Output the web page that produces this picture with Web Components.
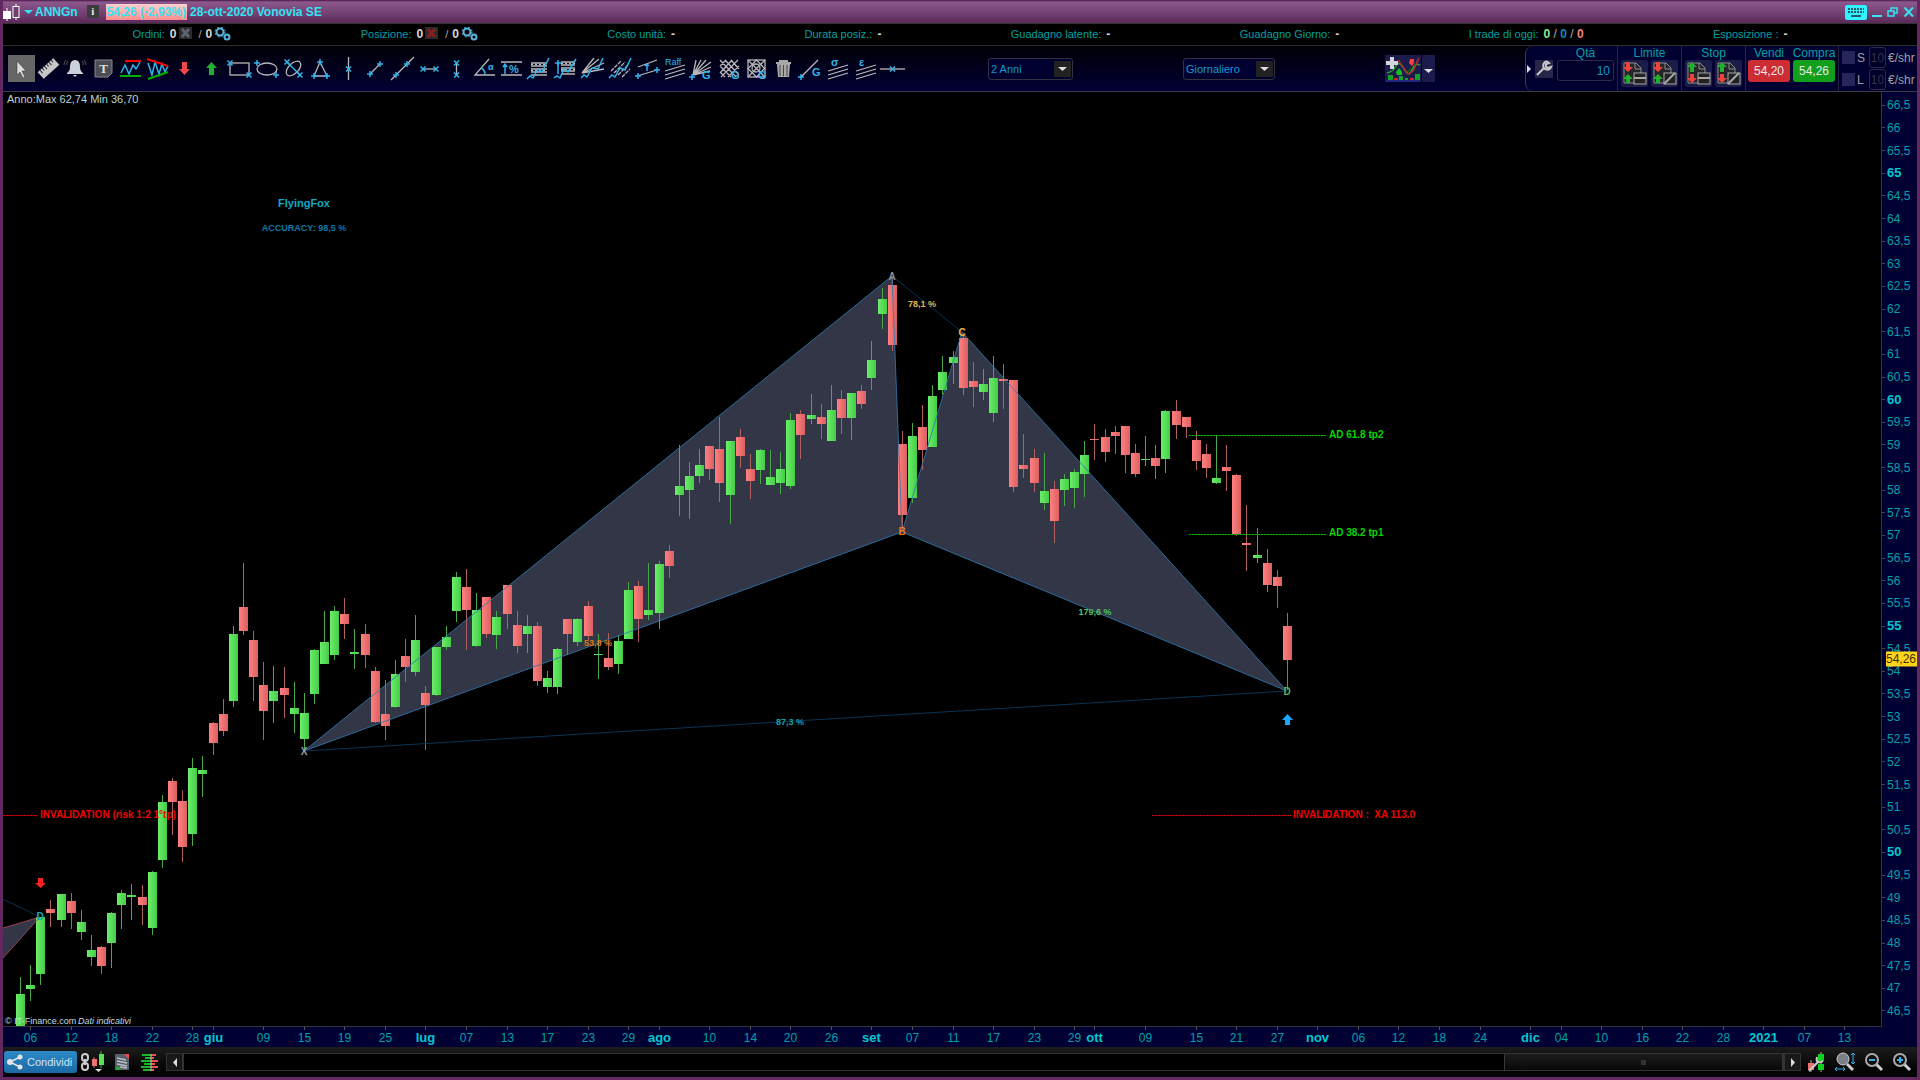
<!DOCTYPE html>
<html lang="it">
<head>
<meta charset="utf-8">
<title>ANNGn - Vonovia SE</title>
<style>
  html, body {
    height: 100%;
    margin: 0;
    background: #000;
  }
  body {
    font-family: "Liberation Sans", Arial, sans-serif;
    font-size: 11px;
    color: #00a0a0;
  }
</style>
</head>
<body>

<trading-window></trading-window>

<template id="windowTemplate">
  <style>
    :host {
      display: flex;
      flex-direction: column;
      box-sizing: border-box;
      min-height: 100vh;
      border: solid #61295f;
      border-width: 0 3px 3px;
    }
    price-chart { flex: 1; }
  </style>
  <title-bar></title-bar>
  <status-row>
    <status-item label="Ordini:" close="#5c636c">0</status-item>
    <status-item label="Posizione:" close="#8c1d1d">0</status-item>
    <status-item label="Costo unità:">-</status-item>
    <status-item label="Durata posiz.:">-</status-item>
    <status-item label="Guadagno latente:">-</status-item>
    <status-item label="Guadagno Giorno:">-</status-item>
    <status-item label="I trade di oggi:"><span style="color:#8fe88f">0</span> <i>/</i> <span style="color:#1287c4">0</span> <i>/</i> <span style="color:#f28080">0</span></status-item>
    <status-item label="Esposizione :">-</status-item>
  </status-row>
  <tool-bar></tool-bar>
  <price-chart></price-chart>
  <bottom-bar></bottom-bar>
</template>

<template id="titleTemplate">
  <style>
    :host {
      display: flex;
      align-items: center;
      height: 23px;
      border-bottom: 1px solid #333;
      background: linear-gradient(#4a1748 0, #8d588c 2px, #6f3d6e 15px, #5c285a);
      font-size: 12px;
      font-weight: bold;
      color: #35e3f2;
    }
    button {
      display: flex;
      padding: 0;
      border: 0;
      background: none;
    }
    .name { margin: 0 9px 0 1px; }
    .info {
      justify-content: center;
      width: 12px;
      background: #3c3c3c;
      font: bold 11px/13px "Liberation Serif", serif;
      color: #e8e8e8;
    }
    .price {
      margin: 0 3px 0 7px;
      padding: 0 1px;
      line-height: 16px;
      background: linear-gradient(#ffd0d0, #ff8c8c);
    }
    .buttons {
      display: flex;
      align-items: center;
      gap: 5px;
      margin: 0 2px 0 auto;
    }
  </style>
  <svg width="17" height="20" viewBox="0 0 17 20">
    <path d="M4 6v13M13 2v16" stroke="#fff"/>
    <rect y="9" width="8" height="8" fill="#fff"/>
    <rect x="10" y="4.500" width="6" height="11" fill="#6f3d6e" stroke="#fff"/>
  </svg>
  <button aria-label="Scegli strumento"><svg width="14" height="10"><path d="M4 3h9l-4.500 4z" fill="#35e3f2"/></svg></button>
  <span class="name">ANNGn</span>
  <button class="info" aria-label="Informazioni">i</button>
  <span class="price">54,26 (-2,93%)</span>
  <span>28-ott-2020 Vonovia SE</span>
  <div class="buttons">
    <button aria-label="Tastiera"><svg width="22" height="16" viewBox="0 0 22 16"><rect y="1" width="22" height="15" rx="2" fill="#2ff3ff"/><path d="M3 5h16M3 8h16" stroke="#245a66" stroke-width="2" stroke-dasharray="2 1"/><path d="M6 12h10" stroke="#245a66" stroke-width="2"/></svg></button>
    <button aria-label="Riduci"><svg width="10" height="12"><path d="M0 10h10" stroke="#35e3f2" stroke-width="2"/></svg></button>
    <button aria-label="Ripristina"><svg width="11" height="12"><path d="M4 5V2h6v5H7" fill="none" stroke="#35e3f2" stroke-width="1.500"/><rect x="1" y="5" width="6" height="5" fill="none" stroke="#35e3f2" stroke-width="1.500"/></svg></button>
    <button aria-label="Chiudi"><svg width="12" height="12"><path d="M1.500 1.500l8.500 9M10 1.500l-8.500 9" stroke="#35e3f2" stroke-width="2"/></svg></button>
  </div>
</template>

<template id="toolbarTemplate">
  <style>
    :host {
      display: flex;
      align-items: center;
      height: 45px;
      border-bottom: 1px solid #3a3a44;
      background: linear-gradient(#000006, #000033);
    }
    .tools {
      display: grid;
      grid-template-columns: repeat(33, 1fr);
      width: 898px;
      margin: 0 82px 0 5px;
    }
    tool-button[name=pointer] { background: #666; }
    .indicators {
      display: flex;
      gap: 1px;
    }
    .indicators button {
      padding: 0;
      border: 0;
      height: 27px;
      background: #1b1b4c;
    }
    drop-down { margin-right: 110px; }
    order-panel {
      align-self: stretch;
      margin-left: auto;
    }
  </style>
  <div class="tools"></div>
  <drop-down label="Periodo" value="2 Anni" style="width:85px"></drop-down>
  <drop-down label="Intervallo" value="Giornaliero" style="width:92px"></drop-down>
  <div class="indicators">
    <button aria-label="Aggiungi indicatore"><svg width="36" height="27" viewBox="0 0 36 27" style="display:block">
      <path d="M14 8l8 8 8-6-8 9z" fill="#0b5c14"/>
      <path d="M2 18q6-1 9-7t8 3 8 1 8-5" fill="none" stroke="#1fa52c" stroke-width="1.500"/>
      <path d="M13 5l10 14q5-1 7-7t4-9" fill="none" stroke="#b02a2a" stroke-width="1.500"/>
      <path d="M3 20h5v5h-5zM14 21h4v4h-4zM30 19h5v6h-5zM20 23h3v2h-3z" fill="#18a025"/>
      <path d="M9 23h4v2h-4zM25 23h4v2h-4z" fill="#c32a2a"/>
      <path d="M11 17l3-4 3 4v3h-5z" fill="#12c020"/>
      <path d="M25 4h4v4l-2 3-3-3z" fill="#ff4040"/>
      <path d="M5 2h4v4h4v4h-4v4h-4v-4h-4v-4h4z" fill="#d4d4e0"/>
      <path d="M1 26h34" stroke="#2a36b0"/>
    </svg></button>
    <button aria-label="Altri indicatori"><svg width="13" height="27" style="display:block"><path d="M2 14h9l-4.500 4z" fill="#ddd"/></svg></button>
  </div>
  <order-panel></order-panel>
</template>

<template id="orderTemplate">
  <style>
    :host {
      display: flex;
      width: 391px;
      border-left: 1px solid #3a3a44;
      border-radius: 8px 0 0 8px;
      background: #000030;
      font-size: 12px;
      color: #00a0a8;
    }
    section {
      box-sizing: border-box;
      display: grid;
      grid-template-rows: 13px 27px;
      justify-items: center;
      row-gap: 1px;
      padding: 0 3px;
      border-right: 1px solid #24243a;
    }
    section > label, section > span { line-height: 14px; }
    section > div {
      display: flex;
      gap: 3px;
    }
    button {
      box-sizing: border-box;
      padding: 0;
      border: 0;
      font: inherit;
    }
    .wrench {
      display: flex;
      align-items: center;
      width: 28px;
    }
    .wrench button {
      display: flex;
      width: 18px;
      height: 18px;
      background: #26264a;
    }
    input[type=text] {
      box-sizing: border-box;
      height: 21px;
      border: 1px solid #2c2c46;
      border-radius: 3px;
      background: #00002a;
      font: inherit;
      color: #0f9bd0;
      text-align: right;
    }
    #qty {
      width: 57px;
      padding: 0 3px;
    }
    .quote {
      width: 42px;
      height: 22px;
      margin: 0;
      border-radius: 3px;
      color: #e8e8e8;
    }
    .sell { background: #cc2c32; }
    .buy { background: #12a01c; }
    .prices {
      display: grid;
      grid-template-columns: 42px 42px;
      grid-template-rows: 13px 27px;
      gap: 1px 3px;
      padding: 0 3px 0 2px;
      justify-items: center;
      border-right: 1px solid #24243a;
    }
    .prices span { line-height: 14px; }
    .stops {
      display: grid;
      grid-template-columns: 13px 10px 17px 28px;
      align-content: space-evenly;
      align-items: center;
      column-gap: 2px;
      padding-left: 3px;
      color: #a0a0a0;
    }
    .stops input[type=text] {
      width: 17px;
      padding: 0;
      color: #333344;
      text-align: center;
    }
    input[type=checkbox] {
      appearance: none;
      width: 13px;
      height: 13px;
      margin: 0;
      background: #26265a;
    }
  </style>
  <div class="wrench">
    <svg width="9" height="14"><path d="M1 3l4 4-4 4z" fill="#ddd"/></svg>
    <button aria-label="Impostazioni ordini"><svg width="18" height="18"><path d="M2 15l7-7M9 3q-2 4 1 6 4 2 6-2l-3 1-2-1 0-3 3-1q-3-3-5 0z" stroke="#c8c8c8" stroke-width="2" fill="none"/></svg></button>
  </div>
  <section>
    <label for="qty">Qtà</label>
    <input id="qty" type="text" value="10">
  </section>
  <section>
    <span>Limite</span>
    <div>
      <order-button label="Limite" up="#f04040" down="#20b030"></order-button>
      <order-button label="Limite personalizzato" up="#f04040" down="#20b030" custom></order-button>
    </div>
  </section>
  <section>
    <span>Stop</span>
    <div>
      <order-button label="Stop" up="#20b030" down="#f04040" flip></order-button>
      <order-button label="Stop personalizzato" up="#20b030" down="#f04040" flip custom></order-button>
    </div>
  </section>
  <div class="prices">
    <span>Vendi</span><span>Compra</span>
    <button class="quote sell">54,20</button>
    <button class="quote buy">54,26</button>
  </div>
  <div class="stops">
    <input type="checkbox" id="s"><label for="s">S</label><input type="text" value="10" aria-label="Stop per azione" disabled><span>€/shr</span>
    <input type="checkbox" id="l"><label for="l">L</label><input type="text" value="10" aria-label="Limite per azione" disabled><span>€/shr</span>
  </div>
</template>

<template id="chartTemplate">
  <style>
    :host {
      display: grid;
      grid-template-columns: 1fr 35px;
      grid-template-rows: 1fr 20px;
      min-height: 0;
      background: #000033;
      color: #00a0a8;
      font-size: 12px;
    }
    svg {
      display: block;
      width: 100%;
      height: 100%;
      min-height: 0;
    }
    .plot {
      min-height: 0;
      border-right: 1px solid #33333c;
      border-bottom: 1px solid #33333c;
      background: #000;
    }
    .prices {
      position: relative;
      display: flex;
      flex-direction: column;
      padding: 2px 0 5px;
    }
    .prices div {
      display: flex;
      flex: 1;
      align-items: center;
      gap: 2px;
      min-height: 0;
      line-height: 14px;
    }
    .prices div::before {
      content: "";
      width: 3px;
      height: 1px;
      background: #444450;
    }
    .prices .major, .major {
      font-size: 13px;
      font-weight: bold;
      color: #00c8d0;
    }
    .last {
      position: absolute;
      top: 60.6%;
      left: 4px;
      right: 0;
      transform: translateY(-50%);
      line-height: 15px;
      background: #ffd21c;
      color: #3c3200;
    }
    text {
      font-weight: bold;
      white-space: pre;
    }
    .times text {
      font-weight: normal;
      text-anchor: middle;
      fill: #00a0a8;
    }
    .times text.major {
      font-weight: bold;
      fill: #00c8d0;
    }
  </style>
  <div class="plot">
    <svg viewBox="3 92 1878 934" preserveAspectRatio="xMinYMin meet">
      <defs>
        <linearGradient id="up"><stop stop-color="#6bee6b"/><stop offset="1" stop-color="#45cc45"/></linearGradient>
        <linearGradient id="down"><stop stop-color="#ff8080"/><stop offset="1" stop-color="#dc6060"/></linearGradient>
      </defs>
      <g fill="#323646">
        <path d="M304 751L892 276 902 532zM902 532L962 332 1287 691z"/>
        <path d="M3 928L40 917 3 958"/>
      </g>
      <g class="candles"></g>
      <g fill="none" stroke="#2e79b0" stroke-opacity=".85">
        <path d="M304 751L892 276 902 532 304 751M902 532L962 332 1287 691 902 532"/>
        <path d="M304 751L1287 691M892 276L962 332M3 899L40 917" stroke="#0a3c62"/>
        <path d="M3 928L40 917 3 958" stroke="#b04858"/>
      </g>
      <g fill="none">
        <path d="M3 815.500H37M1152 815.500H1291" stroke="#700000"/>
        <path d="M3 815.500H37M1152 815.500H1291" stroke="#d80000" stroke-dasharray="2 1"/>
        <path d="M1189 435.500H1326M1189 534.500H1326" stroke="#006800"/>
        <path d="M1189 435.500H1326M1189 534.500H1326" stroke="#00b400" stroke-dasharray="2 1"/>
      </g>
      <path d="M38 878h5v5h3l-5.500 5-5.500-5h3z" fill="#ff2020"/>
      <path d="M1285 725h5v-5h3l-5.500-6-5.500 6h3z" fill="#18a8ff"/>
      <g class="labels"></g>
    </svg>
  </div>
  <div class="prices"></div>
  <svg class="times" viewBox="3 0 1878 20" preserveAspectRatio="xMinYMin meet"></svg>
</template>

<template id="bottomTemplate">
  <style>
    :host {
      display: flex;
      align-items: center;
      height: 30px;
      background: linear-gradient(#1c1c1c, #050505 70%);
    }
    button {
      display: flex;
      align-items: center;
      padding: 0;
      border: 0;
      background: none;
      font: inherit;
    }
    .share {
      gap: 4px;
      width: 73px;
      height: 22px;
      margin: 0 3px 0 1px;
      padding-left: 3px;
      border-radius: 3px;
      background: linear-gradient(#2e8ac8, #1a69a4);
      color: #cfe4f2;
    }
    .icons {
      display: flex;
      gap: 8px;
    }
    .left { gap: 9px; }
    .scroll {
      box-sizing: border-box;
      display: flex;
      flex: 1;
      height: 18px;
      margin: 0 6px;
    }
    .scroll button {
      box-sizing: border-box;
      justify-content: center;
      width: 17px;
      border: 1px solid #333;
      background: #181818;
    }
    .track {
      display: flex;
      flex: 1;
      justify-content: flex-end;
      border: 1px solid #333;
      background: #000;
    }
    .thumb {
      display: flex;
      align-items: center;
      justify-content: center;
      width: 17.3%;
      border: solid #383838;
      border-width: 0 1px;
      background: linear-gradient(#1c1c1c, #080808);
    }
    .thumb::before {
      content: "";
      width: 5px;
      height: 5px;
      background: #333;
    }
    .zoom { margin-right: 5px; }
  </style>
  <button class="share"><svg width="16" height="16"><path d="M13 3L3 8l10 5" fill="none" stroke="#e4e4e4" stroke-width="1.500"/><g fill="#e4e4e4"><circle cx="13" cy="3" r="2.500"/><circle cx="3" cy="8" r="3"/><circle cx="13" cy="13" r="2.500"/></g></svg>Condividi</button>
  <div class="icons left">
    <button aria-label="Collega grafici"><svg width="25" height="22" viewBox="0 0 25 22">
      <g fill="none" stroke="#ccc" stroke-width="2"><rect x="2" y="3" width="6" height="7" rx="3"/><rect x="2" y="12" width="6" height="7" rx="3"/><path d="M5 8v6"/></g>
      <path d="M14 6v11" stroke="#d06060"/><path d="M21 0v17" stroke="#4fb54f"/>
      <path d="M12 8h5v7h-5z" fill="#f07070"/><path d="M19 3h5v11h-5z" fill="#58e058"/><path d="M15 18h7l-3.500 3z" fill="#ddd"/>
    </svg></button>
    <button aria-label="Report"><svg width="17" height="18" viewBox="0 0 17 18"><path d="M1 1h14v16H1z" fill="#55606c"/><path d="M3 5l9 2M3 8l10 2M3 11l10 2M6 14l7 1" stroke="#b8bec4" stroke-width="1.500"/><path d="M10 1h5v5z" fill="#f04848"/><path d="M1 17h6l-3-4z" fill="#20b030"/></svg></button>
    <button aria-label="Book"><svg width="20" height="18" viewBox="0 0 20 18"><path d="M2 2h9M5 5h6M1 8h10M4 11h7M1 14h10M3 17h8" stroke="#18b828" stroke-width="2"/><path d="M11 2h5M11 5h3M11 8h7M11 11h4M11 14h7M11 17h3" stroke="#f05050" stroke-width="2"/><path d="M11 1v17" stroke="#bbb"/></svg></button>
  </div>
  <div class="scroll">
    <button aria-label="Indietro"><svg width="6" height="9"><path d="M5 0v9L1 4.500z" fill="#ddd"/></svg></button>
    <div class="track"><div class="thumb"></div></div>
    <button aria-label="Avanti"><svg width="6" height="9"><path d="M1 0v9l4-4.500z" fill="#ddd"/></svg></button>
  </div>
  <div class="icons zoom">
    <button aria-label="Stile grafico"><svg width="19" height="22" viewBox="0 0 19 22"><path d="M14 1v20M4 9v12" stroke="#aaa"/><path d="M11 3h6v7h-6zM11 13h6v6h-6z" fill="#10d020"/><path d="M1 12h6v7H1z" fill="#f07070"/><path d="M2 20l9-9M10 6q-1 4 1 5t5-1" fill="none" stroke="#ccc" stroke-width="2"/></svg></button>
    <button aria-label="Zoom automatico"><svg width="22" height="22" viewBox="0 0 22 22"><path d="M13 13l6 6" stroke="#ccc" stroke-width="3"/><circle cx="9" cy="8" r="6" fill="#7c8088" stroke="#ccc"/><path d="M19 3v9M17 4l2-2 2 2M17 11l2 2 2-2M2 18h8M3 16l-2 2 2 2M9 16l2 2-2 2" fill="none" stroke="#2fb5ea"/></svg></button>
    <button aria-label="Riduci zoom"><svg width="20" height="20" viewBox="0 0 20 20"><path d="M12 12l6 6" stroke="#ccc" stroke-width="3"/><circle cx="8" cy="8" r="6" fill="none" stroke="#aaa" stroke-width="2"/><path d="M5 8h6" stroke="#2fb5ea" stroke-width="2"/></svg></button>
    <button aria-label="Aumenta zoom"><svg width="20" height="20" viewBox="0 0 20 20"><path d="M12 12l6 6" stroke="#ccc" stroke-width="3"/><circle cx="8" cy="8" r="6" fill="none" stroke="#aaa" stroke-width="2"/><path d="M5 8h6M8 5v6" stroke="#2fb5ea" stroke-width="2"/></svg></button>
  </div>
</template>

<script>
  (function (customElements, document) {
    'use strict';

    function attach(host, templateId) {
      const root = host.attachShadow({mode: 'open'});
      root.appendChild(document.importNode(document.getElementById(templateId).content, true));
      return root;
    }

    // small markers used by the drawing tools
    const cross = (x, y) => `<path class="c" d="M${x - 2.5} ${y - 2.5}l5 5m0 -5l-5 5"/>`;
    const plus = (x, y) => `<path class="c" d="M${x - 3} ${y}h6m-3 -3v6"/>`;
    const label = (x, y, size, t) => `<text x="${x}" y="${y}" font-size="${size}">${t}</text>`;

    const TOOLS = {
      pointer: ['Puntatore', '<path d="M9 6v14l3-3 3 6 2-1-3-6h4z" fill="#ddd" stroke="#333" stroke-width=".5"/>'],
      ruler: ['Righello', '<g transform="rotate(-42 13.5 13.5)"><rect x="3" y="9" width="21" height="9" fill="#c8c8c8"/><path d="M6 9v4m3-4v3m3-3v4m3-4v3m3-3v4m3-4v3" stroke="#333"/></g>'],
      alarm: ['Allarme', '<path d="M13 5q5 0 5 7 0 4 3 6v1H5v-1q3-2 3-6 0-7 5-7zM11 20h4l-2 2z" fill="#ccd2dc"/><path d="M6 6q-2 2-1 4M20 6q2 2 1 4M4 5q-2 2-2 5M22 5q2 2 2 5" stroke="#555" fill="none"/>'],
      text: ['Testo', '<path d="M5 5h17v13l-4 4H5z" fill="#4a4e54" stroke="#888"/><text class="t" x="13.5" y="18" font-size="13">T</text>'],
      trend: ['Supporti e resistenze', '<path class="c" d="M4 18l4-8 4 9 4-9 3 4 4-7"/><path d="M8 6h16" stroke="#f00" stroke-width="2"/><path d="M3 21h21" stroke="#00b000" stroke-width="2"/>'],
      triangles: ['Figure chartiste', '<path class="c" d="M4 8l4 12 3-13 4 12 3-10 3 8 3-6"/><path d="M3 4l21 7" stroke="#f00" stroke-width="2"/><path d="M4 24l20-7" stroke="#00b000" stroke-width="2"/>'],
      down: ['Freccia giù', '<path d="M11 7h5v7h3l-5.5 6L8 14h3z" fill="#f04848"/>'],
      up: ['Freccia su', '<path d="M11 20h5v-7h3l-5.500-6L8 13h3z" fill="#22b030"/>'],
      rect: ['Rettangolo', '<rect class="w" x="4" y="8" width="19" height="12"/>' + cross(4, 8) + cross(23, 20)],
      ellipse: ['Ellisse', '<ellipse class="w" cx="14" cy="14" rx="10" ry="6"/>' + plus(4, 8) + plus(23, 20)],
      oval: ['Ellisse inclinata', '<ellipse class="w" cx="13.5" cy="13.5" rx="9" ry="5" transform="rotate(-45 13.5 13.5)"/><path class="c" d="M7 7l13 13"/>' + cross(7, 7) + cross(20, 20)],
      triangle: ['Triangolo', '<path class="w" d="M13 7l-6 14h13z"/>' + plus(13, 7) + plus(7, 21) + plus(20, 21)],
      vertical: ['Linea verticale', '<path class="w" d="M13.5 2v23"/>' + cross(13.5, 14)],
      segment: ['Segmento', '<path class="w" d="M8 19l10-10"/>' + plus(8, 19) + plus(18, 9)],
      line: ['Retta', '<path class="w" d="M2 25L25 2"/>' + plus(7, 20) + plus(18, 9)],
      hsegment: ['Segmento orizzontale', '<path class="w" d="M7 14h14"/>' + cross(7, 14) + cross(20, 14)],
      vsegment: ['Segmento verticale', '<path class="w" d="M13.5 8v13"/>' + cross(13.5, 8) + cross(13.5, 20)],
      angle: ['Angolo', '<path class="w" d="M24 20H4L18 4"/><path class="c" d="M10 13q4 2 4 6"/>' + label(17, 15, 9, 'α')],
      percent: ['Variazione', '<path class="w" d="M3 7h21M3 20h21"/><path class="c" d="M7 19V9m-2 3l2-3 2 3"/>' + label(11, 18, 11, '%')],
      fibonacci: ['Ritracciamenti', '<path class="w" d="M6 8h16M6 11h16M6 14h16M6 17h16M6 20h16"/><path class="w" stroke-dasharray="2 2" d="M6 9.5h16M6 15.5h16"/><path class="c" d="M2 24l3-3 3 2 5-9 4 3 7-14"/>'],
      extension: ['Estensioni', '<path class="w" d="M9 7h14M9 10h14M9 13h14M9 16h14M9 19h14"/><path class="w" stroke-dasharray="2 2" d="M9 8.5h14M9 14.5h14"/><path class="c" d="M2 23l3-2 3 2 4-9 4 3 8-13M6 8v11"/>' + plus(6, 8)],
      fan: ['Ventaglio', '<path class="w" d="M3 18L15 3M3 18L20 4M3 18L25 8M3 18L25 14"/><path class="c" d="M2 23l3-3 3 2 5-9 6 1 5-11"/>'],
      channels: ['Canali', '<path class="w" stroke-dasharray="4 1" d="M4 16L14 6M7 18L18 7M11 20L22 9M15 22l8-8"/><path class="c" d="M2 23l3-3 3 2 5-9 5 2 6-12"/>'],
      parallel: ['Canale', '<path class="w" d="M4 12l19-7M3 21l20-6"/><path class="c" d="M13 9v7m-2-5l2-2 2 2"/>' + plus(4, 21) + plus(23, 15)],
      raff: ['Regressione Raff', '<path class="w" d="M4 16l20-6M4 20l20-6M4 24l20-6"/>' + label(4, 10, 9, '<tspan font-weight="normal">Raff</tspan>')],
      gannfan: ['Ventaglio di Gann', '<path class="w" d="M5 20L8 5M5 20l8-15M5 20L18 5M5 20l18-13M5 20l18-8M5 20l17-4"/>' + plus(4, 22) + label(14, 24, 11, 'G')],
      ganngrid: ['Griglia di Gann', '<path class="w" d="M4 5l16 17M9 5l14 15M15 5l8 9M4 11l11 11M4 17l5 5M22 5L5 22M16 5L4 18M10 5l-6 6M23 11L12 22"/>' + label(15, 24, 11, 'G')],
      gannbox: ['Quadrato di Gann', '<rect class="w" x="5" y="5" width="17" height="17"/><path class="w" d="M5 5l17 17M22 5L5 22M13.5 5l8 8.500-8 8.500-8.500-8.500z"/><circle cx="13" cy="13" r="4" class="w"/>' + label(15, 24, 11, 'G')],
      trash: ['Cancella', '<path d="M7 9h13l-1 13H8zM6 7h15v2H6zM9 5h9v2H9z" fill="#a8a8a8"/><path d="M10 10v11M13.5 10v11M17 10v11" stroke="#444"/>'],
      gannline: ['Linea di Gann', '<path class="w" d="M4 22L21 5"/>' + plus(4, 22) + label(15, 21, 11, 'G')],
      sigma: ['Deviazione standard', '<path class="w" d="M4 16l20-6M4 20l20-6M4 24l20-6"/>' + label(7, 11, 11, 'σ')],
      epsilon: ['Errore standard', '<path class="w" d="M4 16l20-6M4 20l20-6M4 24l20-6"/>' + label(7, 11, 11, 'ε')],
      horizontal: ['Linea orizzontale', '<path class="w" d="M1 14h25"/>' + cross(13.5, 14)]
    };

    class ToolButton extends HTMLElement {
      connectedCallback() {
        const [title, art] = TOOLS[this.getAttribute('name')];
        this.attachShadow({mode: 'open'}).innerHTML = `
          <style>
            :host { display: block; }
            button { display: block; padding: 0; border: 0; background: none; }
            svg { display: block; overflow: visible; }
            .w { fill: none; stroke: #b8b8b8; stroke-width: 1.3; }
            .c { fill: none; stroke: #2fb5ea; stroke-width: 1.5; }
            text { fill: #2fb5ea; font-family: "Liberation Sans", sans-serif; font-weight: bold; }
            .t { fill: #ddd; font-family: "Liberation Serif", serif; text-anchor: middle; }
          </style>
          <button aria-label="${title}"><svg width="27" height="27">${art}</svg></button>`;
      }
    }

    class DropDown extends HTMLElement {
      connectedCallback() {
        this.attachShadow({mode: 'open'}).innerHTML = `
          <style>
            :host { display: grid; align-items: center; }
            select, svg { grid-area: 1 / 1; }
            select {
              appearance: none;
              width: 100%;
              height: 22px;
              padding: 0 2px;
              border: 1px solid #33333f;
              border-radius: 3px;
              background: #000030;
              font: inherit;
              color: #0f9bd0;
            }
            svg { justify-self: end; margin-right: 2px; pointer-events: none; }
          </style>
          <select aria-label="${this.getAttribute('label')}"><option>${this.getAttribute('value')}</option></select>
          <svg width="17" height="16"><rect width="17" height="16" fill="#222"/><path d="M4 6h9l-4.500 4z" fill="#ddd"/></svg>`;
      }
    }

    class OrderButton extends HTMLElement {
      connectedCallback() {
        const up = this.getAttribute('up');
        const down = this.getAttribute('down');
        // limit orders point at each other, stop orders point away
        const arrows = this.hasAttribute('flip')
          ? `<path d="M5 12V7H2l5-5 5 5H9v5z" fill="${up}"/><path d="M5 14v4H2l5 5 5-5H9v-4z" fill="${down}"/>`
          : `<path d="M5 2v5H2l5 5 5-5H9V2z" fill="${up}"/><path d="M5 23v-4H2l5-5 5 5H9v4z" fill="${down}"/>`;
        const corner = this.hasAttribute('custom') ? 'M13 24L24 13' : 'M13 18h12';
        this.attachShadow({mode: 'open'}).innerHTML = `
          <style>
            :host { display: block; }
            button { display: block; padding: 0; border: 0; border-radius: 2px; background: #1c1c48; }
            svg { display: block; }
          </style>
          <button aria-label="${this.getAttribute('label')}"><svg width="27" height="27">
            <path d="M3 3h12l5 5v15H3z" fill="#26262a" stroke="#8c8c8c"/><path d="M14 3v6h6" fill="none" stroke="#8c8c8c"/>
            ${arrows}
            <rect x="13" y="13" width="12" height="11" fill="#222" stroke="#a8a8a8"/><path d="${corner}" stroke="#a8a8a8" stroke-width="2"/>
          </svg></button>`;
      }
    }

    class StatusItem extends HTMLElement {
      connectedCallback() {
        const close = this.getAttribute('close');
        const extra = close ? `
          <button aria-label="Chiudi"><svg width="13" height="13"><rect width="13" height="12" fill="#2a2a2e"/><path d="M3 2l7 8M10 2l-7 8" stroke="${close}" stroke-width="3"/></svg></button>
          <i>/</i><b>0</b>
          <button aria-label="Opzioni"><svg width="17" height="14"><g fill="none" stroke="#58b4e0"><circle cx="6" cy="5" r="3.500" stroke-width="2"/><circle cx="6" cy="5" r="5" stroke-dasharray="2 2"/><circle cx="13" cy="10" r="2.500" stroke-width="2"/></g></svg></button>` : '';
        this.attachShadow({mode: 'open'}).innerHTML = `
          <style>
            :host { display: flex; align-items: center; white-space: nowrap; }
            b { margin-left: 5px; color: #d8d8d8; font-size: 12px; }
            i, ::slotted(i) { font-style: normal; font-weight: normal; color: #aaa; }
            i { margin-left: 7px; }
            i + b { margin-left: 4px; }
            button { display: flex; margin: 0 0 0 3px; padding: 0; border: 0; background: none; }
            b + button { margin-left: 2px; }
          </style>
          <span>${this.getAttribute('label')}</span><b><slot></slot></b>${extra}`;
      }
    }

    class StatusRow extends HTMLElement {
      constructor() {
        super();
        this.attachShadow({mode: 'open'}).innerHTML = `
          <style>
            :host {
              display: flex;
              justify-content: space-evenly;
              align-items: center;
              height: 19px;
              padding-bottom: 2px;
              border-bottom: 1px solid #2e2e2e;
              background: #000;
            }
          </style>
          <slot></slot>`;
      }
    }

    class ToolBar extends HTMLElement {
      constructor() {
        super();
        const tools = attach(this, 'toolbarTemplate').querySelector('.tools');
        tools.innerHTML = Object.keys(TOOLS).map(name => `<tool-button name="${name}"></tool-button>`).join('');
      }
    }

    // one bar per session: direction, high, body top, body bottom, low
    const BARS = [
      'u 977 994 1026 1026', 'u 965 985 989 1001', 'u 917 917 974 985', 'd 900 909 913 927', 'u 894 894 920 927',
      'd 893 901 913 929', 'u 910 922 932 940', 'u 935 950 957 966', 'd 946 947 966 974', 'u 912 913 943 968',
      'u 890 893 905 929', 'u 884 895 897 920', 'd 885 897 905 925', 'u 871 872 928 935', 'u 795 802 860 868',
      'd 778 781 802 835', 'd 790 801 847 862', 'u 758 768 834 846', 'u 756 770 774 797', 'd 722 723 743 755',
      'd 699 714 731 736', 'u 626 634 701 707', 'd 563 607 631 635', 'd 631 640 677 701', 'd 662 685 711 740',
      'u 666 691 701 723', 'd 667 688 695 718', 'u 682 708 714 733', 'u 693 713 739 751', 'u 649 650 694 704',
      'u 611 642 664 664', 'u 606 611 655 660', 'd 598 614 624 639', 'u 629 652 654 669', 'd 624 634 655 668',
      'd 667 671 722 723', 'd 680 714 726 740', 'u 660 674 707 708', 'd 639 656 667 682', 'u 615 640 672 676',
      'd 686 693 705 750', 'u 647 647 695 696', 'u 626 637 647 650', 'u 572 577 611 622', 'd 569 587 610 650',
      'u 593 610 646 647', 'd 597 597 634 638', 'u 611 617 635 649', 'd 585 585 614 629', 'd 611 625 646 653',
      'u 615 626 634 653', 'd 622 626 681 686', 'u 671 678 687 693', 'u 648 649 687 694', 'd 619 619 634 655',
      'u 618 619 642 646', 'd 601 606 636 640', 'u 634 654 655 679', 'd 633 658 667 670', 'u 635 641 664 674',
      'u 582 590 639 639', 'd 581 586 619 642', 'u 563 610 615 620', 'u 561 564 613 629', 'd 545 551 566 578',
      'u 445 486 495 516', 'u 462 476 490 519', 'u 449 465 476 483', 'd 446 446 469 480', 'd 417 449 483 502',
      'u 441 441 495 524', 'd 429 437 456 468', 'd 454 469 481 499', 'u 449 450 470 484', 'u 450 477 485 485',
      'u 452 469 483 494', 'u 413 420 486 489', 'd 410 414 435 459', 'u 394 415 419 424', 'd 404 417 424 439',
      'u 385 410 441 441', 'd 390 399 418 434', 'u 393 393 418 440', 'd 385 391 404 409', 'u 341 360 378 390',
      'u 288 299 314 329', 'd 276 285 345 351', 'd 431 444 515 531', 'u 423 436 498 503', 'd 405 427 450 470',
      'u 385 396 447 447', 'u 356 372 390 395', 'u 351 357 363 384', 'd 334 338 388 395', 'd 362 381 387 407',
      'u 369 384 392 400', 'u 356 378 413 422', 'd 364 379 381 409', 'd 380 380 487 492', 'd 434 465 469 478',
      'd 449 458 483 492', 'u 453 491 503 510', 'd 481 489 521 543', 'u 474 479 490 506', 'u 469 472 488 508',
      'u 441 455 474 497', 'd 424 439 440 460', 'd 429 437 452 462', 'd 426 432 436 454', 'd 426 426 455 473',
      'd 444 453 474 477', 'u 436 459 460 466', 'd 445 458 466 479', 'u 410 411 459 473', 'd 400 411 425 439',
      'd 417 417 427 438', 'd 431 440 461 470', 'd 444 454 468 478', 'u 435 478 483 484', 'd 445 467 471 491',
      'd 474 475 534 536', 'd 505 543 545 571', 'u 528 555 558 563', 'd 549 563 585 592', 'd 570 577 586 608',
      'd 613 626 660 690'
    ];

    const barX = i => Math.round(20 + i * 10.136) + 0.5;

    // x, baseline, size, colour, text
    const LABELS = [
      [304, 207, 11, '#12a8c8', 'FlyingFox', 'middle'],
      [304, 231, 9, '#0f78a8', 'ACCURACY: 98,5 %', 'middle'],
      [304, 755, 10, '#9aa0a8', 'X', 'middle'],
      [892, 280, 10, '#8a8f96', 'A', 'middle'],
      [902, 535, 10, '#e87818', 'B', 'middle'],
      [962, 336, 10, '#e8b850', 'C', 'middle'],
      [1287, 695, 10, '#58b060', 'D', 'middle'],
      [40, 920, 10, '#18a8b0', 'D', 'middle'],
      [922, 307, 9, '#e0b850', '78,1 %', 'middle'],
      [598, 646, 9, '#d87810', '53,8 %', 'middle'],
      [1095, 615, 9, '#50c060', '179,6 %', 'middle'],
      [790, 725, 9, '#10a0b0', '87,3 %', 'middle'],
      [1329, 438, 10, '#00d800', 'AD 61.8 tp2', 'start'],
      [1329, 536, 10, '#00d800', 'AD 38.2 tp1', 'start'],
      [40, 818, 10, '#f00000', 'INVALIDATION (risk 1:2 1°tp)', 'start'],
      [1293, 818, 10, '#f00000', 'INVALIDATION :  XA 113.0', 'start']
    ];

    // bar index and caption, months and years are major
    const TIMES = '1 06,5 12,9 18,13 22,17 28,19 giu,24 09,28 15,32 19,36 25,40 lug,44 07,48 13,52 17,56 23,60 29,' +
      '63 ago,68 10,72 14,76 20,80 26,84 set,88 07,92 11,96 17,100 23,104 29,106 ott,111 09,116 15,120 21,124 27,' +
      '128 nov,132 06,136 12,140 18,144 24,149 dic,152 04,156 10,160 16,164 22,168 28,172 2021,176 07,180 13';

    class PriceChart extends HTMLElement {
      constructor() {
        super();
        const root = attach(this, 'chartTemplate');

        root.querySelector('.candles').innerHTML = BARS.map((bar, i) => {
          const [dir, high, top, bottom, low] = bar.split(' ');
          const x = barX(i);
          const wick = dir === 'u' ? '#48a848' : '#b06060';
          const fill = dir === 'u' ? 'url(#up)' : 'url(#down)';
          return `<path d="M${x} ${high}V${low}" stroke="${wick}"/>` +
            `<rect x="${x - 4.5}" y="${top}" width="9" height="${Math.max(bottom - top, 1)}" fill="${fill}"/>`;
        }).join('');

        root.querySelector('.labels').innerHTML = LABELS.map(([x, y, size, color, text, anchor]) =>
          `<text x="${x}" y="${y}" font-size="${size}" fill="${color}" text-anchor="${anchor}">${text}</text>`
        ).join('') +
          '<text x="7" y="103" font-size="11" fill="#b8d4d4" style="font-weight:normal">Anno:Max 62,74 Min 36,70</text>' +
          '<text x="5" y="1024" font-size="9" fill="#c0dce0" style="font-weight:normal">© IT-Finance.com</text>' +
          '<text x="78" y="1024" font-size="9" fill="#c0dce0" style="font-weight:normal;font-style:italic">Dati indicativi</text>';

        let rows = '';
        for (let p = 66.5; p >= 46.5; p -= 0.5) {
          rows += `<div class="${p % 5 === 0 ? 'major' : ''}">${String(p).replace('.', ',')}</div>`;
        }
        root.querySelector('.prices').innerHTML = rows + '<span class="last">54,26</span>';

        root.querySelector('.times').innerHTML = TIMES.split(',').map(item => {
          const [i, text] = item.split(' ');
          const major = /[a-z]|2021/.test(text);
          return `<path d="M${barX(+i)} 0v3" stroke="#555"/><text class="${major ? 'major' : ''}" x="${barX(+i)}" y="15">${text}</text>`;
        }).join('');
      }
    }

    customElements.define('tool-button', ToolButton);
    customElements.define('drop-down', DropDown);
    customElements.define('order-button', OrderButton);
    customElements.define('status-item', StatusItem);
    customElements.define('status-row', StatusRow);
    customElements.define('tool-bar', ToolBar);
    customElements.define('price-chart', PriceChart);
    customElements.define('order-panel', class extends HTMLElement {
      constructor() { super(); attach(this, 'orderTemplate'); }
    });
    customElements.define('title-bar', class extends HTMLElement {
      constructor() { super(); attach(this, 'titleTemplate'); }
    });
    customElements.define('bottom-bar', class extends HTMLElement {
      constructor() { super(); attach(this, 'bottomTemplate'); }
    });
    customElements.define('trading-window', class extends HTMLElement {
      constructor() { super(); attach(this, 'windowTemplate'); }
    });
  })(window.customElements, document);
</script>
</body>
</html>
